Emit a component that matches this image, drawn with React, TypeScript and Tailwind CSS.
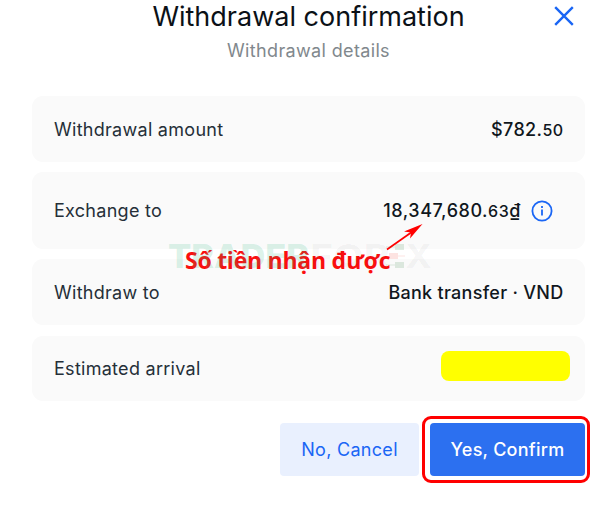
import type { ReactNode } from 'react';

type RowProps = {
    label: string;
    tall?: boolean;
    children: ReactNode;
}

function DetailRow({ label, tall, children }: RowProps) {
    return (
        <div className={`flex items-center justify-between rounded-[11px] bg-[#fafafa] pl-[22px] pr-[21.5px] pt-[1.6px] ${tall ? 'h-[76.3px]' : 'h-[65.6px]'}`}>
            <span className="text-[18px] leading-6 tracking-[0.28px] text-[#252f38]">{label}</span>
            {children}
        </div>
    );
}

function InfoIcon() {
    return (
        <svg width="22" height="22" viewBox="0 0 22 22" fill="none" stroke="#1a66f5" strokeWidth="1.8">
            <circle cx="11" cy="11" r="9.6" />
            <path d="M11 9.6v6M11 6v2" />
        </svg>
    );
}

function Watermark() {
    return (
        <svg className="pointer-events-none absolute left-[164px] top-[236px]" width="274" height="44" viewBox="-4 -7 274 44">
            <g fontFamily="Inter, 'Liberation Sans', sans-serif" fontWeight="800" fontSize="33">
                <text x="0" y="25" fill="#28b67d" fillOpacity="0.18" textLength="141" lengthAdjust="spacingAndGlyphs">TRADER</text>
                <text x="142" y="25" fill="#000000" fillOpacity="0.03" textLength="80" lengthAdjust="spacingAndGlyphs">FOR</text>
                <text x="237" y="25" fill="#000000" fillOpacity="0.03" textLength="27" lengthAdjust="spacingAndGlyphs">X</text>
            </g>
            <g fillOpacity="0.15">
                <path d="M227 1h9v6h-9zM218 3.5h9v1h-9zM227 19h9v6h-9zM218 21.5h9v1h-9z" fill="#2f7d3c" />
                <path d="M221 10h9v6h-9zM230 12.5h7v1h-7z" fill="#f04438" />
            </g>
        </svg>
    );
}

export default function App() {
    return (
        <div className="relative h-[511px] w-[600px] overflow-hidden bg-white pl-[32px] pr-[15px] font-['Inter','Liberation_Sans',sans-serif]">
            <header className="flex h-[96px] flex-col items-center">
                <h1 className="whitespace-nowrap text-[27px] leading-[33px] tracking-[0px] text-[#0b1117]">Withdrawal confirmation</h1>
                <p className="mt-[6px] text-[18px] leading-6 tracking-[0.35px] text-[#81888d]">Withdrawal details</p>
                <button type="button" aria-label="Close" className="absolute left-[554px] top-[6px]">
                    <svg width="20" height="20" viewBox="0 0 20 20" fill="none" stroke="#1a66f5" strokeWidth="2.4">
                        <path d="M1.2 1.2l17.6 17.6M18.8 1.2L1.2 18.8" />
                    </svg>
                </button>
            </header>

            <main className="flex flex-col gap-[10.7px]">
                <DetailRow label="Withdrawal amount">
                    <span className="text-[18px] font-medium leading-6 tracking-[0.4px] text-[#10171d]">
                        $782.<span className="text-[16px]">50</span>
                    </span>
                </DetailRow>
                <DetailRow label="Exchange to" tall>
                    <div className="mr-[10.5px] flex items-center gap-[10px]">
                        <span className="text-[18px] font-medium leading-6 tracking-[0.55px] text-[#10171d]">
                            18,347,680.<span className="text-[16px]">63</span>₫
                        </span>
                        <InfoIcon />
                    </div>
                </DetailRow>
                <DetailRow label="Withdraw to">
                    <span className="text-[18px] font-medium leading-6 tracking-[0.28px] text-[#10171d]">Bank transfer · VND</span>
                </DetailRow>
                <DetailRow label="Estimated arrival">
                    <div className="-mr-[6.5px] mb-[5.4px] h-[30px] w-[129px] rounded-[8px] bg-[#ffff00]" />
                </DetailRow>
            </main>

            <footer className="mt-[21.8px] flex justify-end gap-[11px] text-[18px] leading-6">
                <button type="button" className="h-[53px] w-[139px] rounded-[4px] bg-[#e9f0fe] pt-[1.4px] tracking-[0.3px] text-[#1a66f5]">No, Cancel</button>
                <button type="button" className="relative h-[53px] w-[155px] rounded-[4px] bg-[#2c70f0] pt-[1.4px] font-medium tracking-[0.25px] text-white">
                    Yes, Confirm
                    <span className="absolute -left-[8px] -top-[7px] h-[67px] w-[168px] rounded-[9px] border-[3px] border-[#ff0000]" />
                </button>
            </footer>

            {/* note over the exchanged amount */}
            <span className="absolute left-[185px] top-[244px] whitespace-nowrap font-['Open_Sans','Noto_Sans',sans-serif] text-[23px] font-bold leading-8 tracking-[-0.25px] text-[#fa0f0f]">
                Số tiền nhận được
            </span>
            <svg className="absolute left-[384px] top-[222px]" width="42" height="30" viewBox="0 0 42 30">
                <path d="M3 27.5L30 8.5" stroke="#ff0000" strokeWidth="1.7" />
                <path d="M38.5 2L20 9.5L27 10.6L26 16.5Z" fill="#ff0000" />
            </svg>
            <Watermark />
        </div>
    );
}
